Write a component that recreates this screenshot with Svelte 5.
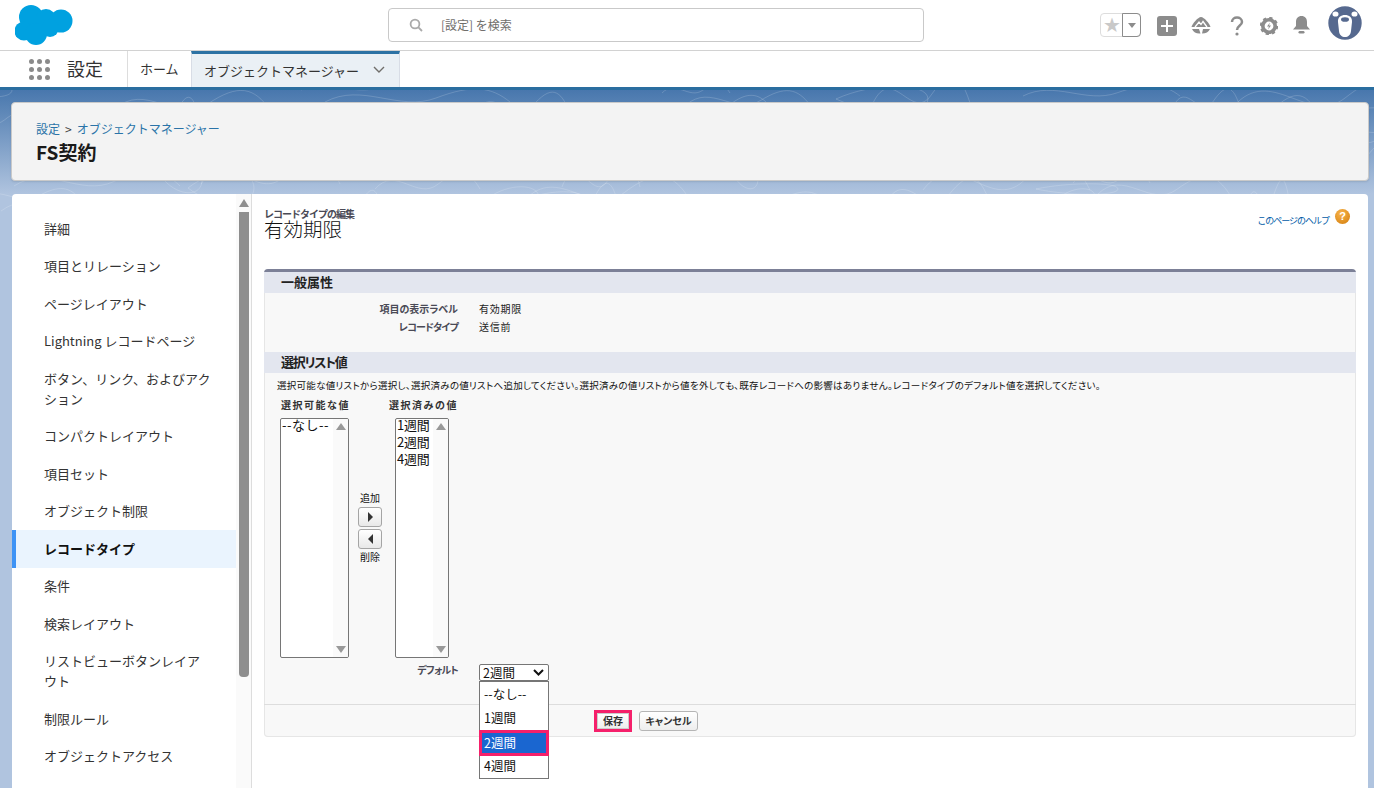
<script>
  const side = ['詳細','項目とリレーション','ページレイアウト','Lightning レコードページ','ボタン、リンク、およびアク\nション','コンパクトレイアウト','項目セット','オブジェクト制限','レコードタイプ','条件','検索レイアウト','リストビューボタンレイア\nウト','制限ルール','オブジェクトアクセス','トリガ'];
  const opts = ['--なし--','1週間','2週間','4週間'];
  const dots = Array.from({length:9},(_,i)=>i);
  const topo = [];
  for (let i=0;i<84;i++){
    const x=(i*137)%1420-60, y=(i*29)%125-8, w=40+(i*53)%150, h=5+(i*7)%18;
    if (i%4===0) topo.push(`M${x} ${y} c${w*.2} ${-h} ${w*.5} ${-h} ${w*.5} 0 s${-w*.3} ${h} ${-w*.5} 0`);
    else topo.push(`M${x} ${y+h} C${x+w*.2} ${y-h} ${x+w*.4} ${y+2*h} ${x+w*.6} ${y+h*.6} S${x+w*.9} ${y-h*.5} ${x+w} ${y+h}`);
  }
</script>

<div class="app">
  <header class="top">
    <svg class="logo" width="58" height="41" viewBox="15 5 58 41"><g fill="#00a1e0"><circle cx="31" cy="17" r="12"/><circle cx="46" cy="19" r="10"/><circle cx="61" cy="21" r="11.5"/><circle cx="24" cy="31" r="9.5"/><circle cx="36" cy="34" r="11"/><circle cx="50" cy="28" r="9"/></g></svg>
    <div class="search">
      <svg width="14" height="14" viewBox="0 0 14 14" fill="none" stroke="#aaa" stroke-width="1.8"><circle cx="6" cy="6" r="4.4"/><path d="M9.2 9.2 13 13"/></svg>
      <span>[設定] を検索</span>
    </div>
    <div class="tools">
      <div class="fav">
        <span class="star">★</span>
        <span class="caret"><i></i></span>
      </div>
      <svg class="t-plus" width="20" height="20" viewBox="0 0 20 20"><rect width="20" height="20" rx="3" fill="#8c8c8c"/><path d="M10 4v12M4 10h12" stroke="#fff" stroke-width="2"/></svg>
      <svg class="t-trail" width="20" height="20" viewBox="0 0 20 20"><path d="M10 1 C13 1 19 8 19.5 11 L0.5 11 C1 8 7 1 10 1Z" fill="#8c8c8c"/><path d="M4 11 8 6l2 2.5L12 5.500 16 11" fill="none" stroke="#fff" stroke-width="1.300"/><path d="M1 13h7l1.500 4.500 C6 18 2.500 16.500 1 13ZM19 13h-7l-1 4.500C15 17.500 17.500 16 19 13Z" fill="#8c8c8c"/></svg>
      <svg class="t-q" width="14" height="20" viewBox="0 0 14 20" fill="none"><path d="M2 6c0-6 10-6 10 0 0 3.500-5 3.500-5 8" stroke="#8c8c8c" stroke-width="2.500"/><circle cx="7" cy="18" r="1.600" fill="#8c8c8c"/></svg>
      <svg class="t-gear" width="18" height="18" viewBox="0 0 18 18"><circle cx="9" cy="9" r="6.200" fill="none" stroke="#8c8c8c" stroke-width="3.600"/><circle cx="9" cy="9" r="8" fill="none" stroke="#8c8c8c" stroke-width="2.400" stroke-dasharray="3.200 3.080"/><path d="M10 5.500 7 9.500h2l-1 3 3-4H9z" fill="#8c8c8c"/></svg>
      <svg class="t-bell" width="19" height="20" viewBox="0 0 19 20"><path d="M9.500 1C13 1 15 3.500 15 7v4l3 3.500H1L4 11V7c0-3.500 2-6 5.500-6Z" fill="#8c8c8c"/><rect x="6.500" y="16" width="6" height="2.500" rx="1.200" fill="#8c8c8c"/></svg>
      <svg class="t-bear" width="34" height="34" viewBox="0 0 34 34"><circle cx="17" cy="17" r="16.700" fill="#56698f"/><ellipse cx="7.500" cy="8" rx="3" ry="2.600" fill="#fff"/><ellipse cx="26.500" cy="8" rx="3" ry="2.600" fill="#fff"/><path d="M17 9c4 0 7.500 2.500 7 7l-1 9c-.4 4-3 6-6 6s-5.600-2-6-6l-1-9c-.5-4.500 3-7 7-7Z" fill="#fff"/><ellipse cx="17" cy="13.500" rx="4" ry="2.300" fill="#56698f"/></svg>
    </div>
  </header>

  <nav class="nav">
    <div class="launcher">{#each dots as d (d)}<i></i>{/each}</div>
    <span class="appname">設定</span>
    <div class="tab home">ホーム</div>
    <div class="tab active">
      <span>オブジェクトマネージャー</span>
      <svg width="12" height="8" viewBox="0 0 12 8" fill="none" stroke="#706e6b" stroke-width="1.400"><path d="M1 1l5 5 5-5"/></svg>
    </div>
  </nav>

  <div class="stage">
    <svg class="topo" width="1374" height="130" viewBox="0 0 1374 130" fill="none" stroke="#fff" stroke-opacity=".17">
      {#each topo as d, i (i)}<path {d}/>{/each}
    </svg>

    <section class="crumbcard">
      <div class="crumb"><a href="#a">設定</a><span class="gt">&gt;</span><a href="#b">オブジェクトマネージャー</a></div>
      <h1>FS契約</h1>
    </section>

    <main class="card">
      <aside class="sidebar">
        <ul>
          {#each side as s, i (i)}
            <li class:sel={i===8}>{s}</li>
          {/each}
        </ul>
      </aside>
      <div class="scroll">
        <svg width="10" height="8" viewBox="0 0 10 8"><path d="M5 0l5 8H0z" fill="#8f8f8f"/></svg>
        <div class="thumb"></div>
      </div>
      <div class="content">
        <div class="titlebar">
          <div>
            <div class="eyebrow">レコードタイプの編集</div>
            <div class="pagetitle">有効期限</div>
          </div>
          <div class="help">
            <a href="#h">このページのヘルプ</a>
            <span class="q">?</span>
          </div>
        </div>

        <div class="panel">
          <h3 class="sec">一般属性</h3>
          <div class="props">
            <div class="lbl">項目の表示ラベル</div><div>有効期限</div>
            <div class="lbl kana">レコードタイプ</div><div>送信前</div>
          </div>
          <h3 class="sec tight">選択リスト値</h3>
          <p class="desc">選択可能な値リストから選択し、選択済みの値リストへ追加してください。選択済みの値リストから値を外しても、既存レコードへの影響はありません。レコードタイプのデフォルト値を選択してください。</p>
          <div class="pick">
            <div class="col c1">
              <div class="colh">選択可能な値</div>
              <div class="listbox">
                <div class="items"><div class="none">--なし--</div></div>
                <div class="lbar"><b class="up"></b><b class="down"></b></div>
              </div>
            </div>
            <div class="mover">
              <span>追加</span>
              <button aria-label="追加"><i class="ar"></i></button>
              <button aria-label="削除"><i class="al"></i></button>
              <span>削除</span>
            </div>
            <div class="col c2">
              <div class="colh">選択済みの値</div>
              <div class="listbox">
                <div class="items"><div>1週間</div><div>2週間</div><div>4週間</div></div>
                <div class="lbar"><b class="up"></b><b class="down"></b></div>
              </div>
            </div>
          </div>
          <div class="defrow">
            <div class="lbl kana">デフォルト</div>
            <div class="selwrap">
              <div class="select"><span>2週間</span><svg width="11" height="7" viewBox="0 0 11 7" fill="none" stroke="#111" stroke-width="2"><path d="M1 1l4.500 4.500L10 1"/></svg></div>
              <div class="menu">
                {#each opts as o, i (i)}
                  <div class="opt" class:on={i===2}>{o}</div>
                {/each}
              </div>
            </div>
          </div>
          <div class="foot">
            <button class="btn save">保存</button>
            <button class="btn cancel">キャンセル</button>
          </div>
        </div>
      </div>
    </main>
  </div>
</div>

<style>
  :global(body){margin:0;overflow:hidden;background:#fff}
  :global(html){overflow:hidden}
  .app{width:1374px;height:788px;overflow:hidden;display:flex;flex-direction:column;font-family:"Noto Sans CJK JP","Noto Sans",sans-serif;color:#222}
  .top{height:50px;flex:none;border-bottom:1px solid #d2d2d2;display:flex;align-items:flex-start;position:relative;background:#fff}
  .logo{margin:5px 0 0 15px;flex:none}
  .search{box-sizing:border-box;width:536px;height:34px;margin:8px 0 0 315px;border:1px solid #c9c9c9;border-radius:4px;display:flex;align-items:center;padding:0 0 1px 20px;font-size:12px;color:#706e6b;flex:none}
  .search span{margin-left:18px;margin-top:-1px}
  .tools{display:flex;align-items:flex-start;margin-left:176px}
  .fav{box-sizing:border-box;margin-top:13px;width:41px;height:24px;border:1px solid #ddd;border-radius:4px;display:flex;flex:none}
  .star{width:22px;color:#c9c9c9;font-size:20px;line-height:22px;text-align:center;font-family:"DejaVu Sans",sans-serif}
  .caret{flex:1;border:1px solid #8c8c8c;margin:-1px;border-radius:0 4px 4px 0;display:flex;align-items:center;justify-content:center}
  .caret i{border:4px solid transparent;border-top:5px solid #8c8c8c;border-bottom:0}
  .t-plus{margin:16px 0 0 16px;flex:none}
  .t-trail{margin:16px 0 0 14px;flex:none}
  .t-q{margin:16px 0 0 19px;flex:none}
  .t-gear{margin:17px 0 0 16px;flex:none}
  .t-bell{margin:15px 0 0 14px;flex:none}
  .t-bear{margin:6px 0 0 17px;flex:none}

  .nav{height:36px;flex:none;display:flex;align-items:stretch;background:#fff}
  .launcher{display:grid;grid-template-columns:repeat(3,5px);gap:3px;margin:8px 0 0 29px;align-content:start}
  .launcher i{width:5px;height:5px;border-radius:50%;background:#8a8a8a}
  .appname{font-size:18px;margin-left:17px;width:60px;line-height:34px;color:#333}
  .tab{font-size:13px;display:flex;align-items:center;color:#333;box-sizing:border-box;padding-bottom:2px}
  .home{width:64px;padding-left:12px;border-left:1px solid #ddd}
  .active{width:209px;padding:0 14px 1px 12px;justify-content:space-between;background:#eaf0f5;border-top:3px solid #2c72a4;border-left:1px solid #d8dde6;border-right:1px solid #d8dde6}

  .stage{flex:1;min-height:0;position:relative;display:flex;flex-direction:column;padding:12px 5px 0 11px;border-top:3px solid #2a6ea0;background:linear-gradient(#4877ad 0,#b0c4df 104px,#b0c4df 100%)}
  .topo{position:absolute;left:0;top:0;pointer-events:none}
  .crumbcard{position:relative;box-sizing:border-box;height:79px;flex:none;background:#f3f3f3;border:1px solid #c9c9c9;border-radius:4px;padding:17px 24px 0;box-shadow:0 1px 2px rgba(0,0,0,.1)}
  .crumb{font-size:12px;line-height:18px;color:#444}
  .crumb a{color:#2a73a8;text-decoration:none}
  .gt{margin:0 5px 0 5px}
  h1{margin:0;font-size:19px;line-height:28px;font-weight:700;color:#1a1a1a}

  .card{position:relative;flex:1;min-height:0;margin:13px 1px 0 1px;background:#fff;border-radius:4px 4px 0 0;display:flex;overflow:hidden}
  .sidebar{width:224px;flex:none;padding-top:16px}
  ul{list-style:none;margin:0;padding:0}
  li{font-size:13px;line-height:20px;padding:8.75px 0 8.75px 32px;color:#333;box-sizing:border-box;white-space:pre-line}
  li.sel{background:#eaf4fe;border-left:4px solid #3e93f5;padding-left:28px;font-weight:700;color:#111}
  .scroll{width:16px;flex:none;box-sizing:border-box;background:#fafafa;border-right:1px solid #ddd;display:flex;flex-direction:column;align-items:flex-start;padding:5px 0 0 3px}
  .thumb{width:10px;height:465px;margin-top:5px;background:#8e8e8e;border-radius:0 0 4px 4px}
  .content{flex:1;min-width:0;padding:14px 12px 0 12px;font-size:10px}
  .titlebar{display:flex;justify-content:space-between;align-items:flex-start;height:61px}
  .eyebrow{font-size:10px;line-height:12px;font-weight:700;color:#4a4a56;letter-spacing:-1px}
  .pagetitle{font-size:19.500px;line-height:22px;margin-top:-2px;font-weight:300;color:#111}
  .help{display:flex;align-items:flex-start;gap:6px;padding-right:6px;margin-top:1px}
  .help a{color:#015ba7;font-size:9px;line-height:14px;margin-top:5px;text-decoration:none;letter-spacing:-1px}
  .q{width:15px;height:15px;border-radius:50%;background:radial-gradient(circle at 40% 30%,#f8b44a,#d27c0c);color:#fff;font:700 11px/15px "Liberation Sans",sans-serif;text-align:center}

  .panel{box-sizing:border-box;height:468px;border-top:3px solid #7c8097;border-radius:4px;background:#f8f8f8;box-shadow:inset 0 0 0 1px #e6e6e6;display:flex;flex-direction:column;overflow:visible}
  .sec{margin:0;height:21px;flex:none;background:#e3e6ef;font-size:13px;line-height:20px;font-weight:700;padding-left:17px;color:#222;font-feature-settings:"palt"}
  .tight{letter-spacing:-1.300px}
  .props{display:grid;grid-template-columns:194px 1fr;column-gap:21px;row-gap:0;padding-top:7px;height:59px;box-sizing:border-box;flex:none;grid-auto-rows:18px;line-height:18px;color:#222;letter-spacing:.75px}
  .lbl{text-align:right;font-weight:700;color:#4a4a56;letter-spacing:0;font-feature-settings:"palt"}
  .kana{letter-spacing:-.8px}
  .desc{margin:5px 0 0 13px;font-size:9.500px;line-height:14px;white-space:nowrap;color:#111;font-feature-settings:"palt";letter-spacing:.28px}
  .pick{display:flex;flex:none;height:260px;margin:6px 0 0 16px;align-items:stretch}
  .col{display:flex;flex-direction:column}
  .colh{font-weight:700;font-size:10px;line-height:14px;height:20px;color:#333;letter-spacing:1.500px;white-space:nowrap;margin-left:1px}
  .c1{width:69px}
  .c2{width:54px}
  .c2 .colh{margin-left:-6px}
  .listbox{flex:none;box-sizing:border-box;height:240px;border:1px solid #767676;border-radius:2px;background:#fff;display:flex;overflow:hidden}
  .items{flex:1;font-size:13px;line-height:17px;color:#111;padding-left:1px;white-space:nowrap;margin:-3px -4px 0 0;letter-spacing:-.2px}
  .none{letter-spacing:.5px}
  .lbar{width:15px;flex:none;background:#fafafa;display:flex;flex-direction:column;justify-content:space-between;align-items:center;padding:4px 0;position:relative}
  .lbar b{width:0;height:0;border:5px solid transparent}
  .up{border-top:0!important;border-bottom:7px solid #999!important}
  .down{border-bottom:0!important;border-top:7px solid #999!important}
  .mover{width:46px;display:flex;flex-direction:column;align-items:center;padding:93px 4px 0 0;box-sizing:border-box;color:#111;line-height:14px}
  .mover button{width:24px;height:20px;padding:0;margin:0 0 2px;flex:none;border:1px solid #a5a5a5;border-radius:3px;background:linear-gradient(#fff,#e8e8e8);display:flex;align-items:center;justify-content:center}
  .mover span:first-child{margin-bottom:2px}
  .mover span:last-child{margin-top:-1px}
  .ar{border:5px solid transparent;border-left:5px solid #333;border-right:0}
  .al{border:5px solid transparent;border-right:5px solid #333;border-left:0}

  .defrow{display:grid;grid-template-columns:194px 70px;column-gap:21px;flex:none;height:46px}
  .defrow .lbl{line-height:14px;margin-top:5px}
  .selwrap{position:relative;margin-top:6px}
  .select{box-sizing:border-box;height:17px;border:1px solid #767676;border-radius:2px;background:#fff;font-size:12.500px;line-height:15px;padding-left:3px;display:flex;justify-content:space-between;align-items:center;padding-right:4px;color:#111}
  .menu{position:absolute;left:0;top:17px;width:70px;box-sizing:border-box;height:98px;border:1px solid #767676;background:#fff;z-index:2;padding:0 1px}
  .opt{height:24px;line-height:24px;font-size:12.500px;padding-left:3px;color:#111}
  .opt.on{background:#1a66d0;color:#fff;outline:3px solid #f5206b;height:20px;line-height:20px;margin:3px 1px 1px;padding-left:2px}
  .foot{flex:1;border-top:1px solid #ddd;display:flex;align-items:flex-start;padding:6px 0 0 333px;gap:10px;border-radius:0 0 4px 4px}
  .btn{box-sizing:border-box;height:20px;padding:0;font:700 10px/18px "Noto Sans CJK JP",sans-serif;color:#333;border:1px solid #b5b5b5;border-radius:3px;background:linear-gradient(#fff,#eee)}
  .cancel{width:59px;font-feature-settings:"palt"}
  .save{width:32px;height:16px;margin-top:2px;line-height:14px;outline:3px solid #f5206b;border:1px solid #ccc;border-radius:0;font-size:10px}
</style>
